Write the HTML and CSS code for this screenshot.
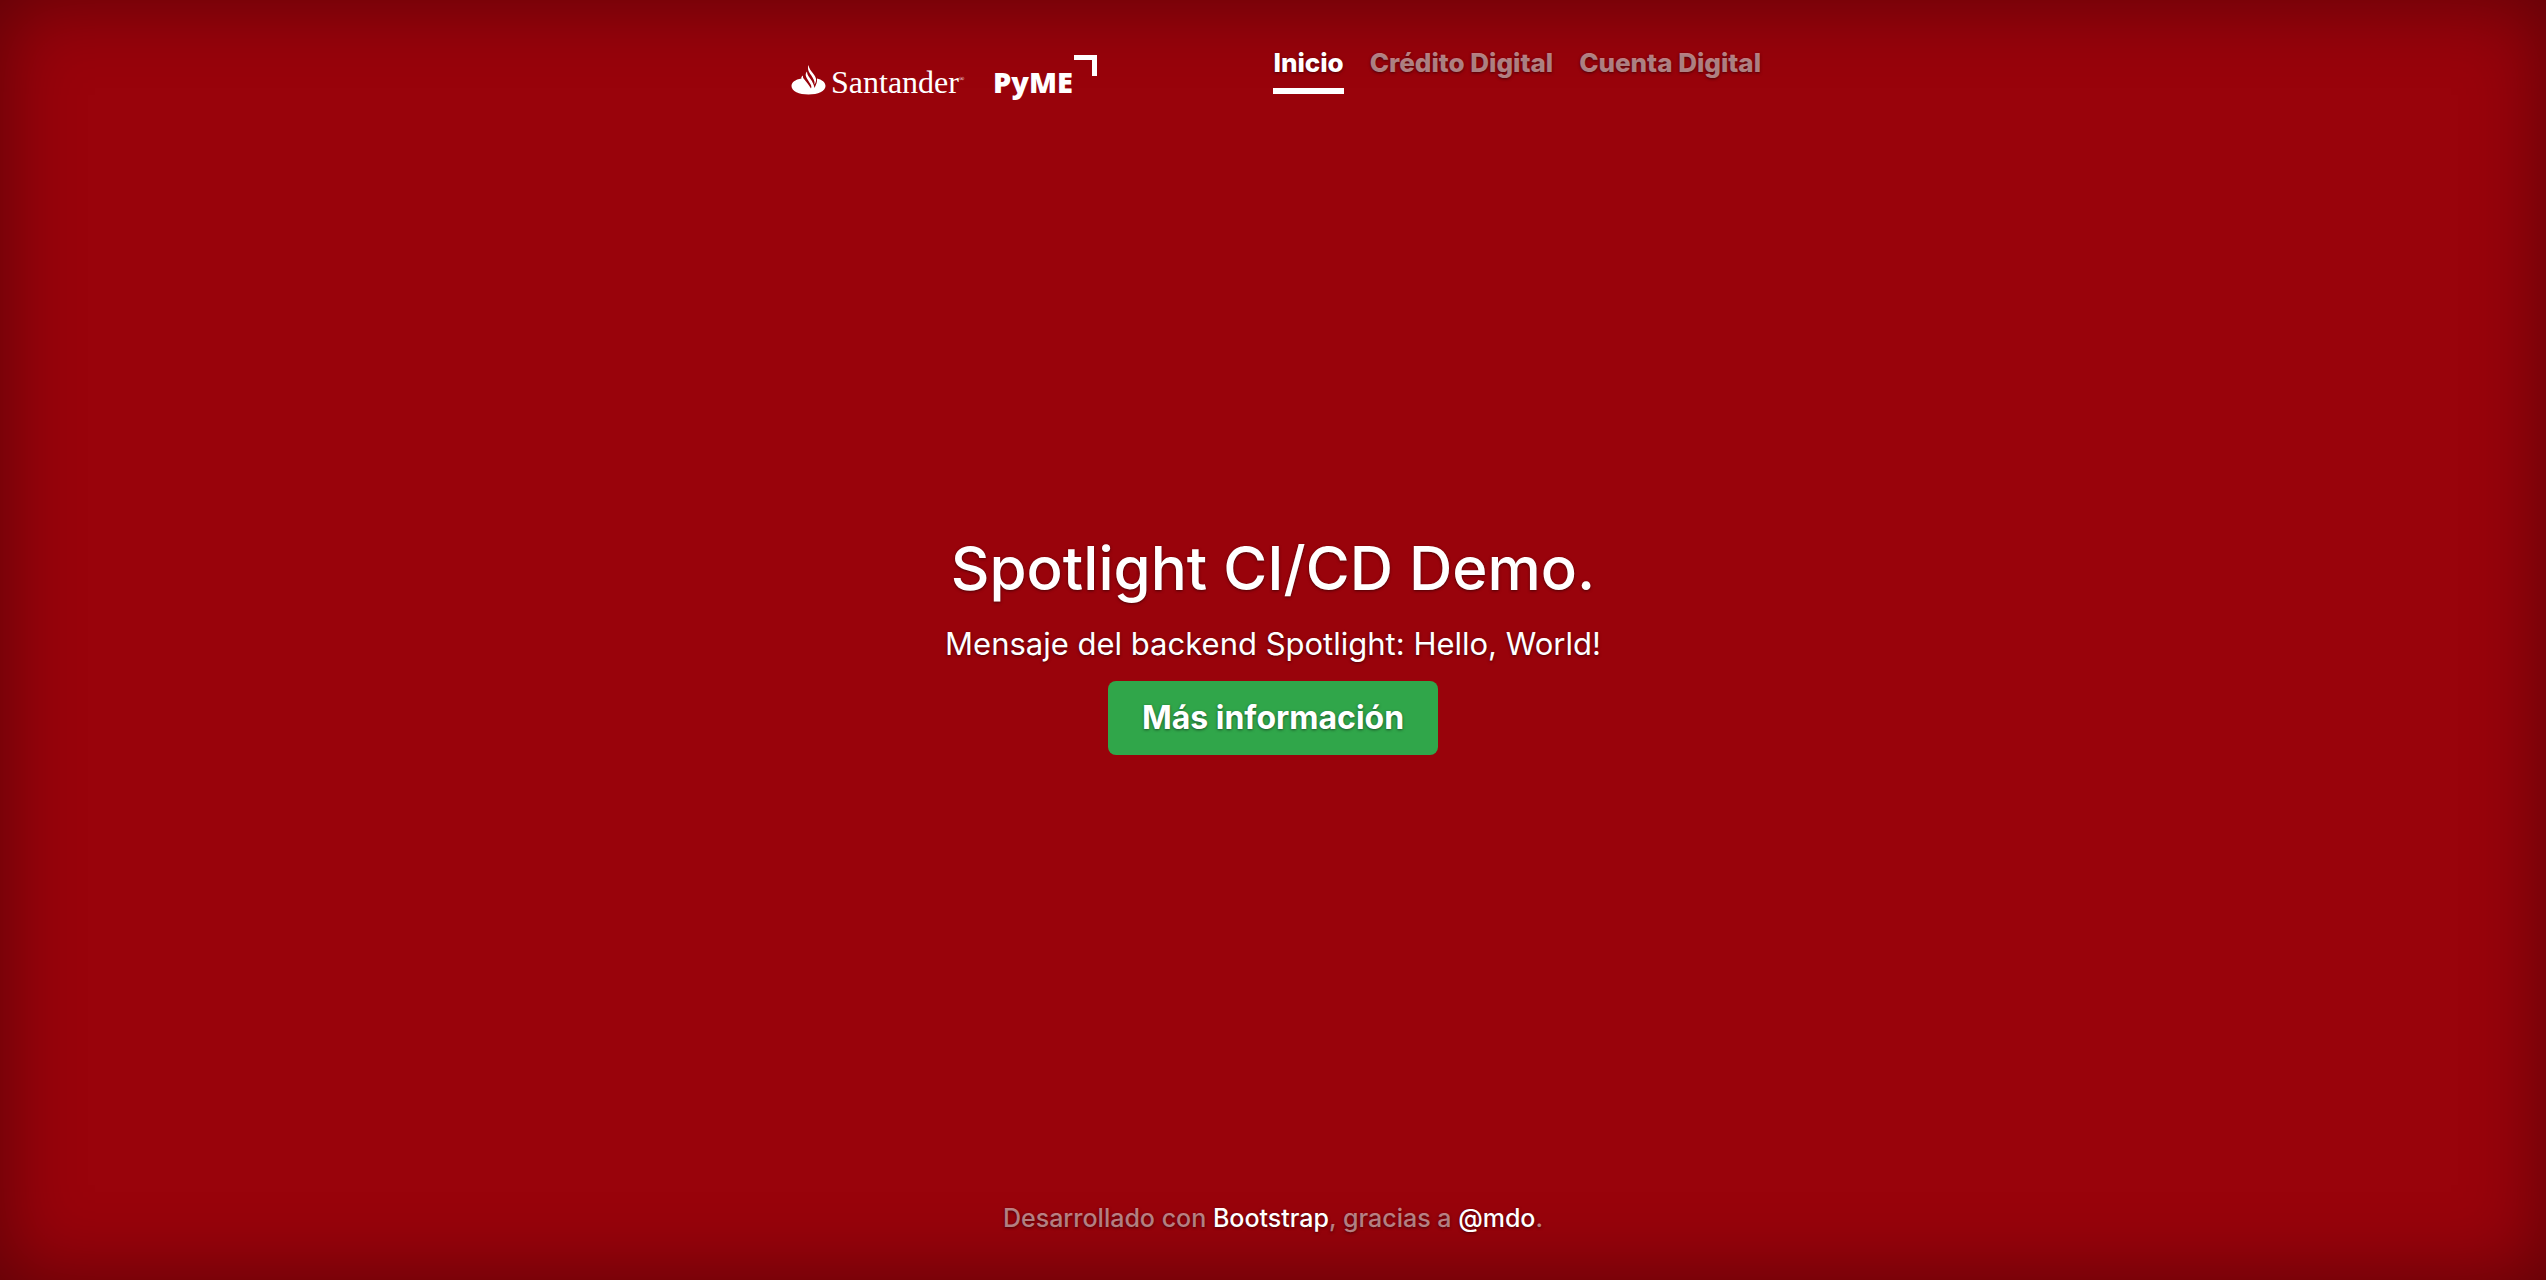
FILE: index.html
```html
<!DOCTYPE html>
<html lang="es">
<head>
<meta charset="utf-8">
<meta name="viewport" content="width=device-width, initial-scale=1">
<title>Spotlight CI/CD Demo</title>
<link rel="stylesheet" href="styles.css">
</head>
<body>
<div class="cover">
  <header class="masthead">
    <a class="brand" href="#" aria-label="Santander PyME">
      <svg class="logo" width="312" height="56" viewBox="0 0 312 56" aria-hidden="true">
        <g fill="#fff">
          <path d="M16.500 32.500C10 33.500 6.500 36.500 6.500 40C6.500 45 14 48.500 23.500 48.500S40.500 45 40.500 40C40.500 36.500 37 33.500 32 32.500C32.500 36 31 38.500 29.500 42C28.800 38 27.500 36 25.500 33C23 29.500 22 28 22 25.500C19.500 28.500 21 31 23.500 35C26 39 27 40.500 26 42.500C24.500 40 23 38 21 35.500C19 33 17.500 32 18 29.500C16.500 30.500 16 31.500 16.500 32.500Z"/>
          <path d="M23.500 19C22 23.500 24 26 26 29C28.500 33 30 35 29.500 38.500C32.500 34 31 31.500 28.500 28C26 24.500 24 23 23.500 19Z"/>
          <path d="M289 9H312V30H307V14H289Z"/>
        </g>
        <text class="logo-bank" x="46" y="47">Santander</text>
        <text class="logo-mark" x="174" y="35">®</text>
        <text class="logo-pyme" x="208" y="47">PyME</text>
      </svg>
    </a>
    <nav class="nav">
      <a class="nav-link active" href="#" aria-current="page">Inicio</a>
      <a class="nav-link" href="#">Crédito Digital</a>
      <a class="nav-link" href="#">Cuenta Digital</a>
    </nav>
  </header>
  <main class="hero">
    <h1 class="title">Spotlight CI/CD Demo.</h1>
    <p class="lead">Mensaje del backend Spotlight: Hello, World!</p>
    <button class="btn" type="button">Más información</button>
  </main>
  <footer class="footer">
    <p>Desarrollado con <a href="#">Bootstrap</a>, gracias a <a href="#">@mdo</a>.</p>
  </footer>
</div>
</body>
</html>
```
FILE: styles.css
```css
* {
  box-sizing: border-box;
}

body {
  margin: 0;
  background: #99030b;
  color: #fff;
  font: 26px/40px Inter, "Liberation Sans", sans-serif;
  text-align: center;
  text-shadow: 0 1px 3px rgba(0, 0, 0, .5);
  box-shadow: inset 0 0 80px rgba(0, 0, 0, .4);
}

a {
  color: #fff;
  text-decoration: none;
}

.cover {
  display: flex;
  flex-direction: column;
  justify-content: space-between;
  min-height: 100vh;
  max-width: 976px;
  margin: 0 auto;
}

.masthead {
  display: flex;
  flex-wrap: wrap;
  justify-content: space-between;
  align-items: flex-start;
  padding-top: 43px;
}

.brand {
  display: flex;
  padding-top: 3px;
}

.logo text {
  fill: #fff;
  text-shadow: none;
}

.logo-bank {
  font: 32px "Liberation Serif", serif;
}

.logo-mark {
  font: 7px "Liberation Serif", serif;
}

.logo-pyme {
  font: 800 29px "Open Sans", sans-serif;
}

.nav {
  display: flex;
  gap: 26px;
}

.nav-link {
  padding-bottom: 5px;
  border-bottom: 6px solid transparent;
  color: rgba(255, 255, 255, .5);
  font-weight: 800;
}

.nav-link.active {
  border-color: #fff;
  color: #fff;
}

.hero {
  padding-bottom: 16px;
}

.title {
  margin: 0 0 12px;
  font-size: 60px;
  font-weight: 500;
  line-height: 78px;
}

.lead {
  margin: 0 0 12px;
  font-size: 31px;
  line-height: 50px;
}

.btn {
  padding: 12px 34px;
  border: 0;
  border-radius: 8px;
  background: #30a64a;
  color: #fff;
  font: 700 32px/50px Inter, "Liberation Sans", sans-serif;
  text-shadow: 0 1px 3px rgba(0, 0, 0, .5);
}

.footer {
  color: rgba(255, 255, 255, .5);
  font-size: 25px;
  font-weight: 500;
}

.footer p {
  margin: 0 0 42px;
}
```
